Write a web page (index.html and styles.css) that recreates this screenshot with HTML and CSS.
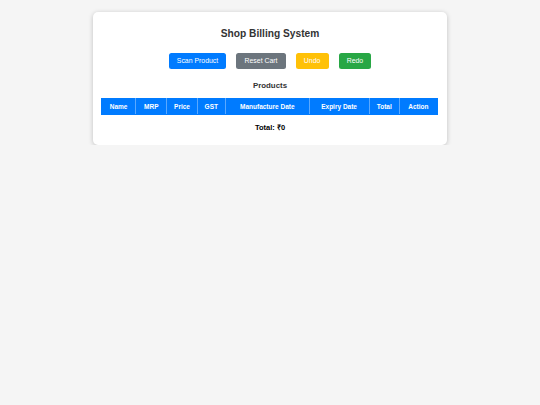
FILE: index.html
```html
<!DOCTYPE html>
<html>
<head>
<meta charset="utf-8">
<link rel="stylesheet" href="styles.css">
</head>
<body>
<div class="card">
  <h1 class="title">Shop Billing System</h1>
  <div class="actions">
    <button class="btn btn-blue">Scan Product</button>
    <button class="btn btn-gray">Reset Cart</button>
    <button class="btn btn-yellow">Undo</button>
    <button class="btn btn-green">Redo</button>
  </div>
  <h2 class="subtitle">Products</h2>
  <table class="products">
    <thead>
      <tr>
        <th class="c-name">Name</th>
        <th class="c-mrp">MRP</th>
        <th class="c-price">Price</th>
        <th class="c-gst">GST</th>
        <th class="c-mfg">Manufacture Date</th>
        <th class="c-exp">Expiry Date</th>
        <th class="c-total">Total</th>
        <th class="c-action">Action</th>
      </tr>
    </thead>
    <tbody></tbody>
  </table>
  <div class="grand">Total: ₹0</div>
</div>
</body>
</html>
```
FILE: styles.css
```css
html, body {
  margin: 0;
  padding: 0;
  background: #f5f5f5;
  font-family: "Liberation Sans", Arial, sans-serif;
}
body {
  padding-top: 12px;
}
.card {
  width: 338px;
  margin: 0 auto;
  background: #fff;
  padding: 8px 8px 11px 8px;
  border-radius: 5px;
  box-shadow: 0 1px 5px rgba(0,0,0,0.22);
}
.title {
  margin: 7px 0 12px 0;
  font-size: 10.2px;
  line-height: 14px;
  font-weight: bold;
  color: #333;
  text-align: center;
}
.actions {
  display: flex;
  justify-content: center;
  gap: 10px;
}
.btn {
  font-family: "Liberation Sans", Arial, sans-serif;
  font-size: 6.9px;
  height: 16px;
  padding: 0 8.2px;
  border: none;
  border-radius: 2.5px;
  color: #fff;
  line-height: 16px;
}
.btn-blue { background: #007bff; }
.btn-gray { background: #6c757d; }
.btn-yellow { background: #ffc107; }
.btn-green { background: #28a745; }
.subtitle {
  margin: 11px 0 6px 0;
  font-size: 7.9px;
  line-height: 12px;
  font-weight: bold;
  color: #333;
  text-align: center;
}
.products {
  width: 337px;
  border-collapse: collapse;
}
.products th {
  background: #007bff;
  color: #fff;
  font-size: 6.5px;
  font-weight: bold;
  height: 15px;
  padding: 0;
  border: 1px solid #5aa9ff;
  border-top-color: #007bff;
  border-bottom-color: #007bff;
  text-align: center;
}
.products th:first-child { border-left-color: #007bff; }
.products th:last-child { border-right-color: #007bff; }
.c-name { width: 34px; }
.c-mrp { width: 31px; }
.c-price { width: 30px; }
.c-gst { width: 28px; }
.c-mfg { width: 85px; }
.c-exp { width: 61px; }
.c-total { width: 30px; }
.c-action { width: 38px; }
.grand {
  margin-top: 7px;
  font-size: 7.5px;
  line-height: 12px;
  font-weight: bold;
  color: #000;
  text-align: center;
}
```
